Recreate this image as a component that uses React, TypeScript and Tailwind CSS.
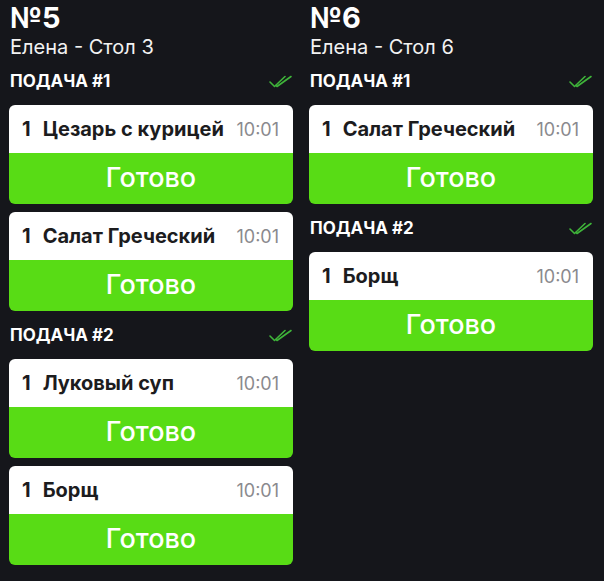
import React from 'react';

type Dish = { qty: number; name: string; time: string };
type Course = { title: string; dishes: Dish[] };
type Order = { number: number; waiter: string; table: number; courses: Course[] };

const orders: Order[] = [
  {
    number: 5,
    waiter: 'Елена',
    table: 3,
    courses: [
      {
        title: 'ПОДАЧА #1',
        dishes: [
          { qty: 1, name: 'Цезарь с курицей', time: '10:01' },
          { qty: 1, name: 'Салат Греческий', time: '10:01' },
        ],
      },
      {
        title: 'ПОДАЧА #2',
        dishes: [
          { qty: 1, name: 'Луковый суп', time: '10:01' },
          { qty: 1, name: 'Борщ', time: '10:01' },
        ],
      },
    ],
  },
  {
    number: 6,
    waiter: 'Елена',
    table: 6,
    courses: [
      { title: 'ПОДАЧА #1', dishes: [{ qty: 1, name: 'Салат Греческий', time: '10:01' }] },
      { title: 'ПОДАЧА #2', dishes: [{ qty: 1, name: 'Борщ', time: '10:01' }] },
    ],
  },
];

const DoubleCheck = () => (
  <svg width="24" height="14" viewBox="0 0 24 14" fill="none" stroke="#3fb43a" strokeWidth={1.6} strokeLinecap="round" strokeLinejoin="round">
    <path d="M1 7l4.5 4.5L16 1.5" />
    <path d="M7 10.5l1 1L22 1.5" />
  </svg>
);

const DishCard: React.FC<{ dish: Dish }> = ({ dish }) => (
  <div className="rounded-[6px] overflow-hidden">
    <div className="bg-white h-[48px] flex items-center justify-between pl-[13px] pr-[14px]">
      <span className="text-[20px] font-bold text-[#1c1c1e]">
        {dish.qty}
        <span className="ml-[12px]">{dish.name}</span>
      </span>
      <span className="text-[18px] text-[#8a8a8e]">{dish.time}</span>
    </div>
    <button className="w-full h-[51px] bg-[#58dc15] text-white text-[27px] font-medium flex items-center justify-center">
      Готово
    </button>
  </div>
);

export default function App() {
  return (
    <div
      className="min-h-[581px] bg-[#15161b] text-white pl-[9px] pr-[11px] grid grid-cols-2 gap-4 items-start"
      style={{ fontFamily: 'Inter, "Liberation Sans", Arial, sans-serif' }}
    >
      {orders.map(order => (
        <div key={order.number}>
          <div className="pl-[1px] pt-[2px]">
            <div className="text-[29px] font-bold leading-[32px]">№{order.number}</div>
            <div className="text-[20px] leading-[24px] mt-[1px] text-[#f2f2f2]">
              {order.waiter} - Стол {order.table}
            </div>
          </div>
          <div className="mt-[11px]">
            {order.courses.map(course => (
              <div key={course.title} className="mb-[13px]">
                <div className="h-[24px] flex items-center justify-between pl-[1px] mb-[11px]">
                  <span className="text-[17px] font-bold">{course.title}</span>
                  <DoubleCheck />
                </div>
                <div className="flex flex-col gap-2">
                  {course.dishes.map((d, i) => (
                    <DishCard key={i} dish={d} />
                  ))}
                </div>
              </div>
            ))}
          </div>
        </div>
      ))}
    </div>
  );
}
